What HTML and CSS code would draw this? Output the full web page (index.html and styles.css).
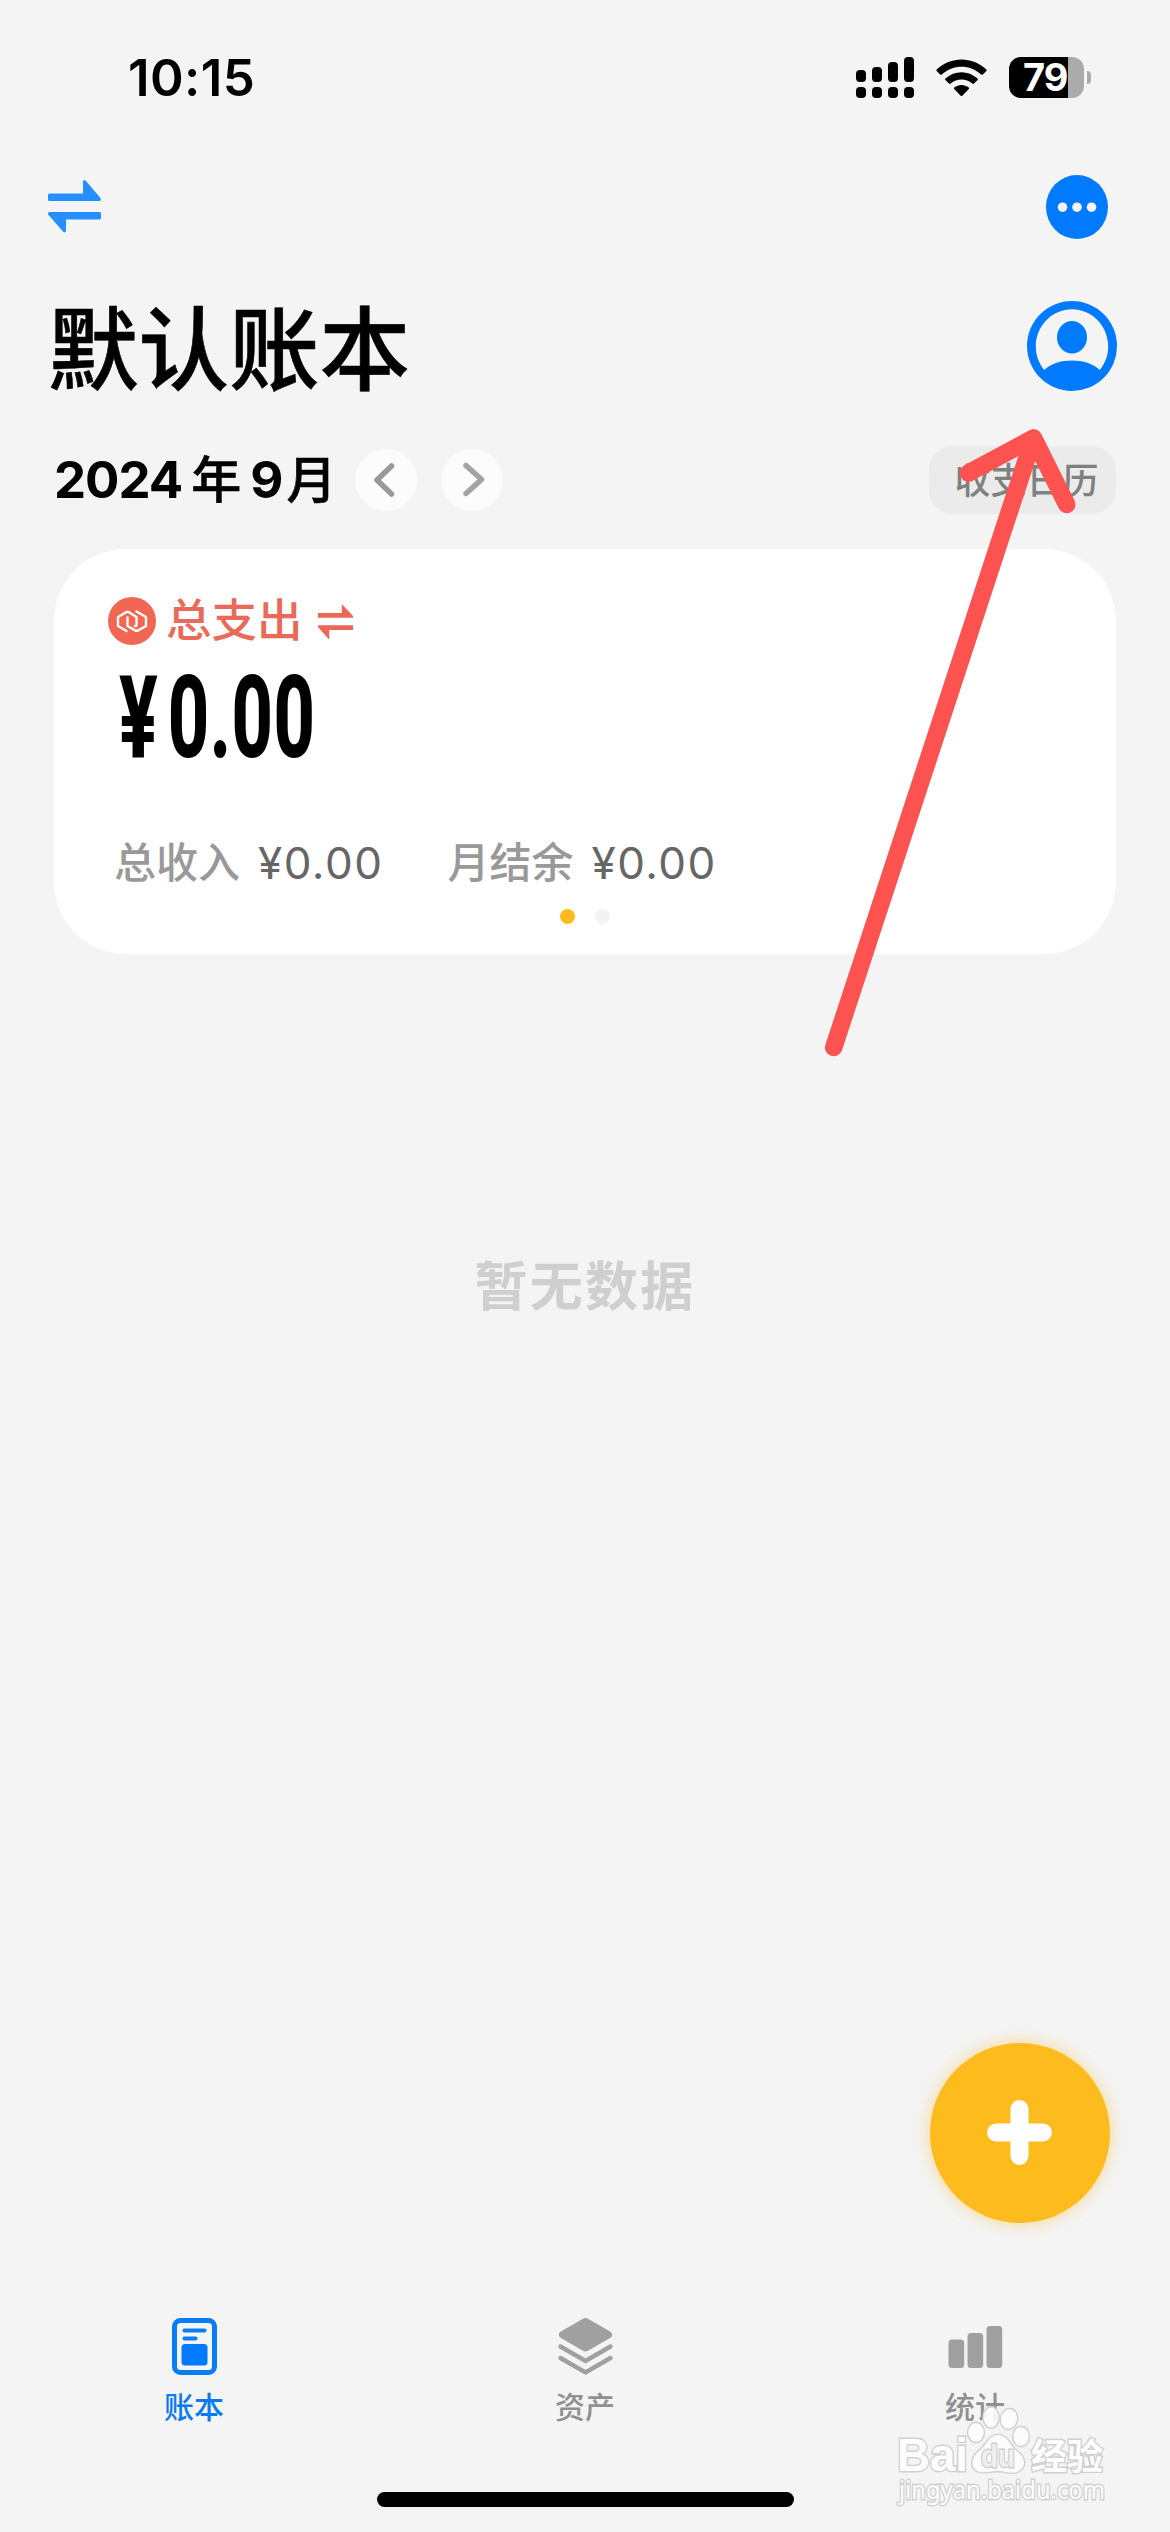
FILE: index.html
```html
<!DOCTYPE html>
<html lang="zh-CN">
<head>
<meta charset="utf-8">
<title>默认账本</title>
<link rel="stylesheet" href="styles.css">
</head>
<body>
<div class="phone">
  <header class="status">
    <span class="clock">10:15</span>
    <div class="status-icons">
      <svg class="signal" viewBox="0 0 58 41">
        <rect x="0" y="13" width="10" height="12" rx="4"/><rect x="16" y="10" width="10" height="15" rx="4"/><rect x="32" y="5" width="10" height="20" rx="4"/><rect x="48" y="0" width="10" height="25" rx="4"/>
        <rect x="0" y="30" width="10" height="11" rx="4"/><rect x="16" y="30" width="10" height="11" rx="4"/><rect x="32" y="30" width="10" height="11" rx="4"/><rect x="48" y="30" width="10" height="11" rx="4"/>
      </svg>
      <svg class="wifi" viewBox="0 0 51 38">
        <path d="M.6 10.6C14.5-3 36.500-3 50.400 10.600Q51 11.300 50.400 12L46.800 15.500Q46 16.100 45.200 15.500C34 5 17 5 5.800 15.500Q5 16.100 4.200 15.500L.6 12Q0 11.300.6 10.600Z"/>
        <path d="M9.400 19.600C18.500 11 32.500 11 41.600 19.600Q42.200 20.300 41.600 21L38 24.600Q37.200 25.200 36.400 24.600C30 19 21 19 14.600 24.600Q13.800 25.200 13 24.600L9.400 21Q8.800 20.300 9.400 19.600Z"/>
        <path d="M18.200 28.500C22.500 25 28.500 25 32.800 28.500Q33.400 29.200 32.800 29.900L26.300 36.700Q25.500 37.300 24.700 36.700L18.200 29.900Q17.600 29.200 18.200 28.500Z"/>
      </svg>
      <div class="battery"><div class="battery-body"><span>79</span></div><i class="battery-tip"></i></div>
    </div>
  </header>

  <nav class="topbar">
    <svg class="swap" viewBox="0 0 53 53"><path d="M1.500 13.500H35V1.500Q36 -1 38 1L52.500 18Q53.500 20.500 51.500 21H1.500Q0 21 0 19.500V15Q0 13.500 1.500 13.500ZM51.500 32H1.500Q-1 33 .5 35L15 51.500Q17 53.500 18 51V39.500H51.500Q53 39.500 53 38V33.500Q53 32 51.500 32Z"/></svg>
    <svg class="more" viewBox="0 0 62 64"><ellipse cx="31" cy="32" rx="31" ry="32" fill="#007aff"/><g fill="#f3f3f3"><circle cx="16.500" cy="32.200" r="4.800"/><circle cx="31" cy="32.200" r="4.800"/><circle cx="45.500" cy="32.200" r="4.800"/></g></svg>
  </nav>

  <section class="heading">
    <h1>默认账本</h1>
    <svg class="avatar" viewBox="0 0 90 90"><path fill-rule="evenodd" d="M45 0A45 45 0 1 1 45 90A45 45 0 1 1 45 0ZM45 8.300C25 8.300 8.800 25 8.800 45.500C8.800 54.500 12 62.500 17.200 69C24 62.500 34 59.500 45 59.500S66 62.500 72.800 69C78 62.500 81.200 54.500 81.200 45.500C81.200 25 65 8.300 45 8.300Z"/><ellipse cx="45" cy="36.300" rx="15" ry="16.300"/></svg>
  </section>

  <section class="month">
    <div class="date"><b>2024</b><span class="nian">年</span><b class="nine">9</b><span class="yue">月</span></div>
    <button class="step"><svg viewBox="0 0 62 62"><path d="M36.500 17L22 31L36.500 45"/></svg></button>
    <button class="step next"><svg viewBox="0 0 62 62"><path d="M25 16.500L40.500 30.500L25 44.500"/></svg></button>
    <button class="calendar">收支日历</button>
  </section>

  <section class="card">
    <div class="card-title">
      <svg class="coin" viewBox="0 0 48 48"><circle cx="24" cy="24" r="24" fill="#f26754"/><path d="M18.500 34L10 29V20L18.500 15H20.500L28.500 20V28Q28.500 29.500 27 29M28.500 14.500L38 20V29L29.500 33.700H27.500L19.500 29V20.500" fill="none" stroke="#fff" stroke-width="2.400" stroke-linecap="round" stroke-linejoin="round"/></svg>
      <span>总支出</span>
      <svg class="swap-small" viewBox="0 0 53 53"><path d="M0 13.500H36V0L53 18V21H0ZM53 32H0V35L16 53H17V39.500H53Z"/></svg>
    </div>
    <div class="amount"><span class="currency">¥</span>0.00</div>
    <div class="totals">
      <span class="label">总收入</span><span class="value">¥0.00</span>
      <span class="label second">月结余</span><span class="value">¥0.00</span>
    </div>
    <div class="pager"><i class="on"></i><i></i></div>
  </section>

  <main class="empty">暂无数据</main>

  <button class="fab"><svg viewBox="0 0 65 65"><path d="M32.500 9V56M9 32.500H56"/></svg></button>

  <footer class="tabs">
    <div class="tab active">
      <svg viewBox="0 0 57 57"><rect x="8.500" y="2.500" width="40" height="52" rx="6" fill="none" stroke="currentColor" stroke-width="5"/><path d="M18.500 12.500H38.500M18.500 20.500H29.500" fill="none" stroke="currentColor" stroke-width="4.200" stroke-linecap="round"/><rect x="15.500" y="26" width="26" height="21.500" rx="3.500"/></svg>
      <span>账本</span>
    </div>
    <div class="tab">
      <svg viewBox="0 0 57 57"><path d="M26 .8Q28.500-.7 31 .8L53.500 13.800Q57 16.700 53.500 19.700L31 32.800Q28.500 34.300 26 32.800L3.500 19.700Q0 16.700 3.500 13.800Z"/><path d="M3.500 28.500L28.500 43L53.500 28.500M3.500 40L28.500 54.500L53.500 40" fill="none" stroke="currentColor" stroke-width="4.400" stroke-linecap="round"/></svg>
      <span>资产</span>
    </div>
    <div class="tab">
      <svg viewBox="0 0 57 57"><rect x="1.500" y="21.500" width="15.700" height="28.500" rx="3.500"/><rect x="20.500" y="15" width="15.700" height="35" rx="3.500"/><rect x="39.500" y="8" width="15.700" height="42" rx="3.500"/></svg>
      <span>统计</span>
    </div>
  </footer>
  <div class="home-indicator"></div>

  <svg class="pointer" viewBox="0 0 1170 1100"><path d="M833.700 1047.500L1033.500 438M968.500 473L1033.500 438L1066.700 504.500"/></svg>

  <svg class="watermark" viewBox="0 0 230 110">
    <g class="wm-shape">
      <ellipse cx="86" cy="42.500" rx="7.800" ry="9.500"/>
      <ellipse cx="101" cy="27.500" rx="7.500" ry="10"/>
      <ellipse cx="119" cy="29" rx="8" ry="10" transform="rotate(10 119 29)"/>
      <ellipse cx="131" cy="46.500" rx="7.800" ry="9.500"/>
      <path d="M108 45C98 45 97 55 89 61C81 67 80 77 87 81C93 84 100 81 108 81S122 85 129 81C137 76 135 67 127 61C119 55 118 45 108 45Z"/>
    </g>
    <text class="wm-brand" x="7" y="81" textLength="71" lengthAdjust="spacingAndGlyphs">Bai</text>
    <text class="wm-du" x="91" y="77" textLength="34" lengthAdjust="spacingAndGlyphs">du</text>
    <text class="wm-cn" x="141" y="80" textLength="72" lengthAdjust="spacingAndGlyphs">经验</text>
    <text class="wm-url" x="9" y="109" textLength="206" lengthAdjust="spacingAndGlyphs">jingyan.baidu.com</text>
  </svg>
</div>
</body>
</html>
```
FILE: styles.css
```css
* { box-sizing: border-box; }
body { margin: 0; background: #f4f4f4; }
svg { display: block; overflow: visible; }
button { border: 0; padding: 0; font: inherit; }

.phone {
  position: relative;
  display: flex;
  flex-direction: column;
  width: 1170px;
  height: 2532px;
  overflow: hidden;
  background: #f4f4f4;
  color: #000;
  font-family: Inter, "Noto Sans CJK SC", sans-serif;
}

.status {
  display: flex;
  justify-content: space-between;
  height: 156px;
  padding: 48px 79px 0 128px;
}
.clock { font-size: 51px; line-height: 60px; font-weight: 600; letter-spacing: .4px; }
.status-icons { display: flex; padding-top: 9px; }
.signal { width: 58px; height: 41px; }
.wifi { width: 51px; height: 38px; margin: 2px 22px 0; }
.battery { display: flex; align-items: center; gap: 3px; height: 41px; }
.battery-body {
  width: 75px;
  height: 41px;
  border-radius: 12px;
  background: linear-gradient(to right, #000 59px, #ababab 59px);
  color: #fff;
  font-size: 38px;
  line-height: 41px;
  font-weight: 700;
  letter-spacing: -1px;
  padding-left: 14px;
}
.battery-tip { width: 4px; height: 13px; background: #ababab; border-radius: 0 6px 6px 0; }

.topbar {
  display: flex;
  justify-content: space-between;
  height: 120px;
  padding: 19px 62px 0 48px;
}
.swap { width: 53px; height: 53px; margin-top: 5px; fill: #268fff; }
.more { width: 62px; height: 64px; }

.heading {
  display: flex;
  justify-content: space-between;
  height: 160px;
  padding: 25px 53px 0 48px;
}
h1 { margin: 2px 0 0; font-size: 90.500px; line-height: 94px; font-weight: 500; -webkit-text-stroke: .6px #000; }
.avatar { width: 90px; height: 90px; fill: #007aff; }

.month {
  display: flex;
  align-items: center;
  height: 88px;
  padding: 0 54px 0 54px;
}
.date { display: flex; align-items: center; width: 301px; font-size: 51px; line-height: 60px; }
.date b { font-weight: 700; letter-spacing: -1px; }
.nian, .yue { font-weight: 500; font-size: 50px; -webkit-text-stroke: .6px #000; }
.nian { margin-left: 9px; }
.date .nine { margin-left: 9px; }
.yue { margin-left: 4px; }
.step { flex: none; width: 62px; height: 62px; border-radius: 50%; background: #fcfcfc; }
.step svg { width: 62px; height: 62px; fill: none; stroke: #999; stroke-width: 5.500; stroke-linecap: round; stroke-linejoin: round; }
.next { margin-left: 24px; }
.next svg { stroke: #a3a3a3; }
.calendar {
  width: 187px;
  height: 68px;
  margin-left: auto;
  border-radius: 24px;
  background: #ebebeb;
  color: #808080;
  font-size: 36px;
  line-height: 66px;
  font-weight: 500;
  padding: 2px 0 0 8px;
}

.card {
  height: 405px;
  margin: 25px 54px 0;
  padding: 42px 54px 0;
  border-radius: 72px;
  background: #fff;
}
.card-title { display: flex; align-items: center; height: 60px; color: #e86a58; font-size: 45.500px; line-height: 60px; font-weight: 500; }
.coin { width: 48px; height: 48px; margin-right: 10px; }
.swap-small { width: 35px; height: 35px; margin-left: 15px; fill: #ec6755; }
.amount {
  height: 110px;
  margin: 12px 0 0 11px;
  width: max-content;
  font-family: Roboto, sans-serif;
  font-size: 115px;
  line-height: 110px;
  font-weight: 800;
  letter-spacing: .8px;
  transform: scaleX(.625);
  transform-origin: left;
}
.currency { letter-spacing: 16px; }
.totals { display: flex; align-items: center; height: 60px; margin: 60px 0 0 6px; font-size: 42px; line-height: 60px; }
.label { color: #999; font-weight: 500; }
.second { margin-left: 64px; }
.value { color: #666; font-size: 44px; letter-spacing: 1.500px; margin-left: 18px; }
.pager { display: flex; justify-content: center; gap: 20px; margin-top: 16px; }
.pager i { width: 15px; height: 15px; border-radius: 50%; background: #f3f3f3; }
.pager .on { background: #fdbb1d; }

.empty { height: 70px; margin-top: 298px; text-align: center; color: #cfcfcf; font-size: 53px; line-height: 70px; font-weight: 600; letter-spacing: 2.200px; }

.fab {
  display: grid;
  place-items: center;
  width: 180px;
  height: 180px;
  margin: auto 60px 0 auto;
  border-radius: 50%;
  background: #febb1e;
  box-shadow: 0 0 16px rgba(254, 187, 30, .5);
}
.fab svg { width: 65px; height: 65px; margin: 0 1px 1px 0; stroke: #fff; stroke-width: 18; stroke-linecap: round; }

.tabs { display: grid; grid-template-columns: repeat(3, 1fr); margin-top: 95px; height: 174px; }
.tab { display: flex; flex-direction: column; align-items: center; color: #909090; font-size: 30px; line-height: 40px; font-weight: 500; }
.tab svg { width: 57px; height: 57px; fill: #a0a0a0; color: #a0a0a0; }
.tab span { margin-top: 12px; }
.active { color: #0a7aef; }
.active svg { fill: #007aff; color: #087df5; }
.active svg, .active span { margin-left: -2px; }

.home-indicator { width: 417px; height: 15px; margin: 0 auto 25px; border-radius: 8px; background: #000; }

.pointer { position: absolute; left: 0; top: 0; width: 1170px; height: 1100px; fill: none; stroke: #fc5250; stroke-width: 17.500; stroke-linecap: round; stroke-linejoin: round; }

.watermark { position: absolute; left: 890px; top: 2390px; width: 230px; height: 110px; }
.watermark text, .wm-shape { fill: #fdfdfd; stroke: #d0d0d0; stroke-width: 2.800; paint-order: stroke; }
.wm-shape { fill-opacity: .9; }
.wm-brand { font: 700 47px "Liberation Sans", sans-serif; }
.watermark .wm-du { font: 700 31px "Liberation Sans", sans-serif; fill: #efefef; }
.wm-cn { font: 700 36px "Noto Sans CJK SC", sans-serif; }
.wm-url { font: 400 26px "Noto Sans", sans-serif; }
```
